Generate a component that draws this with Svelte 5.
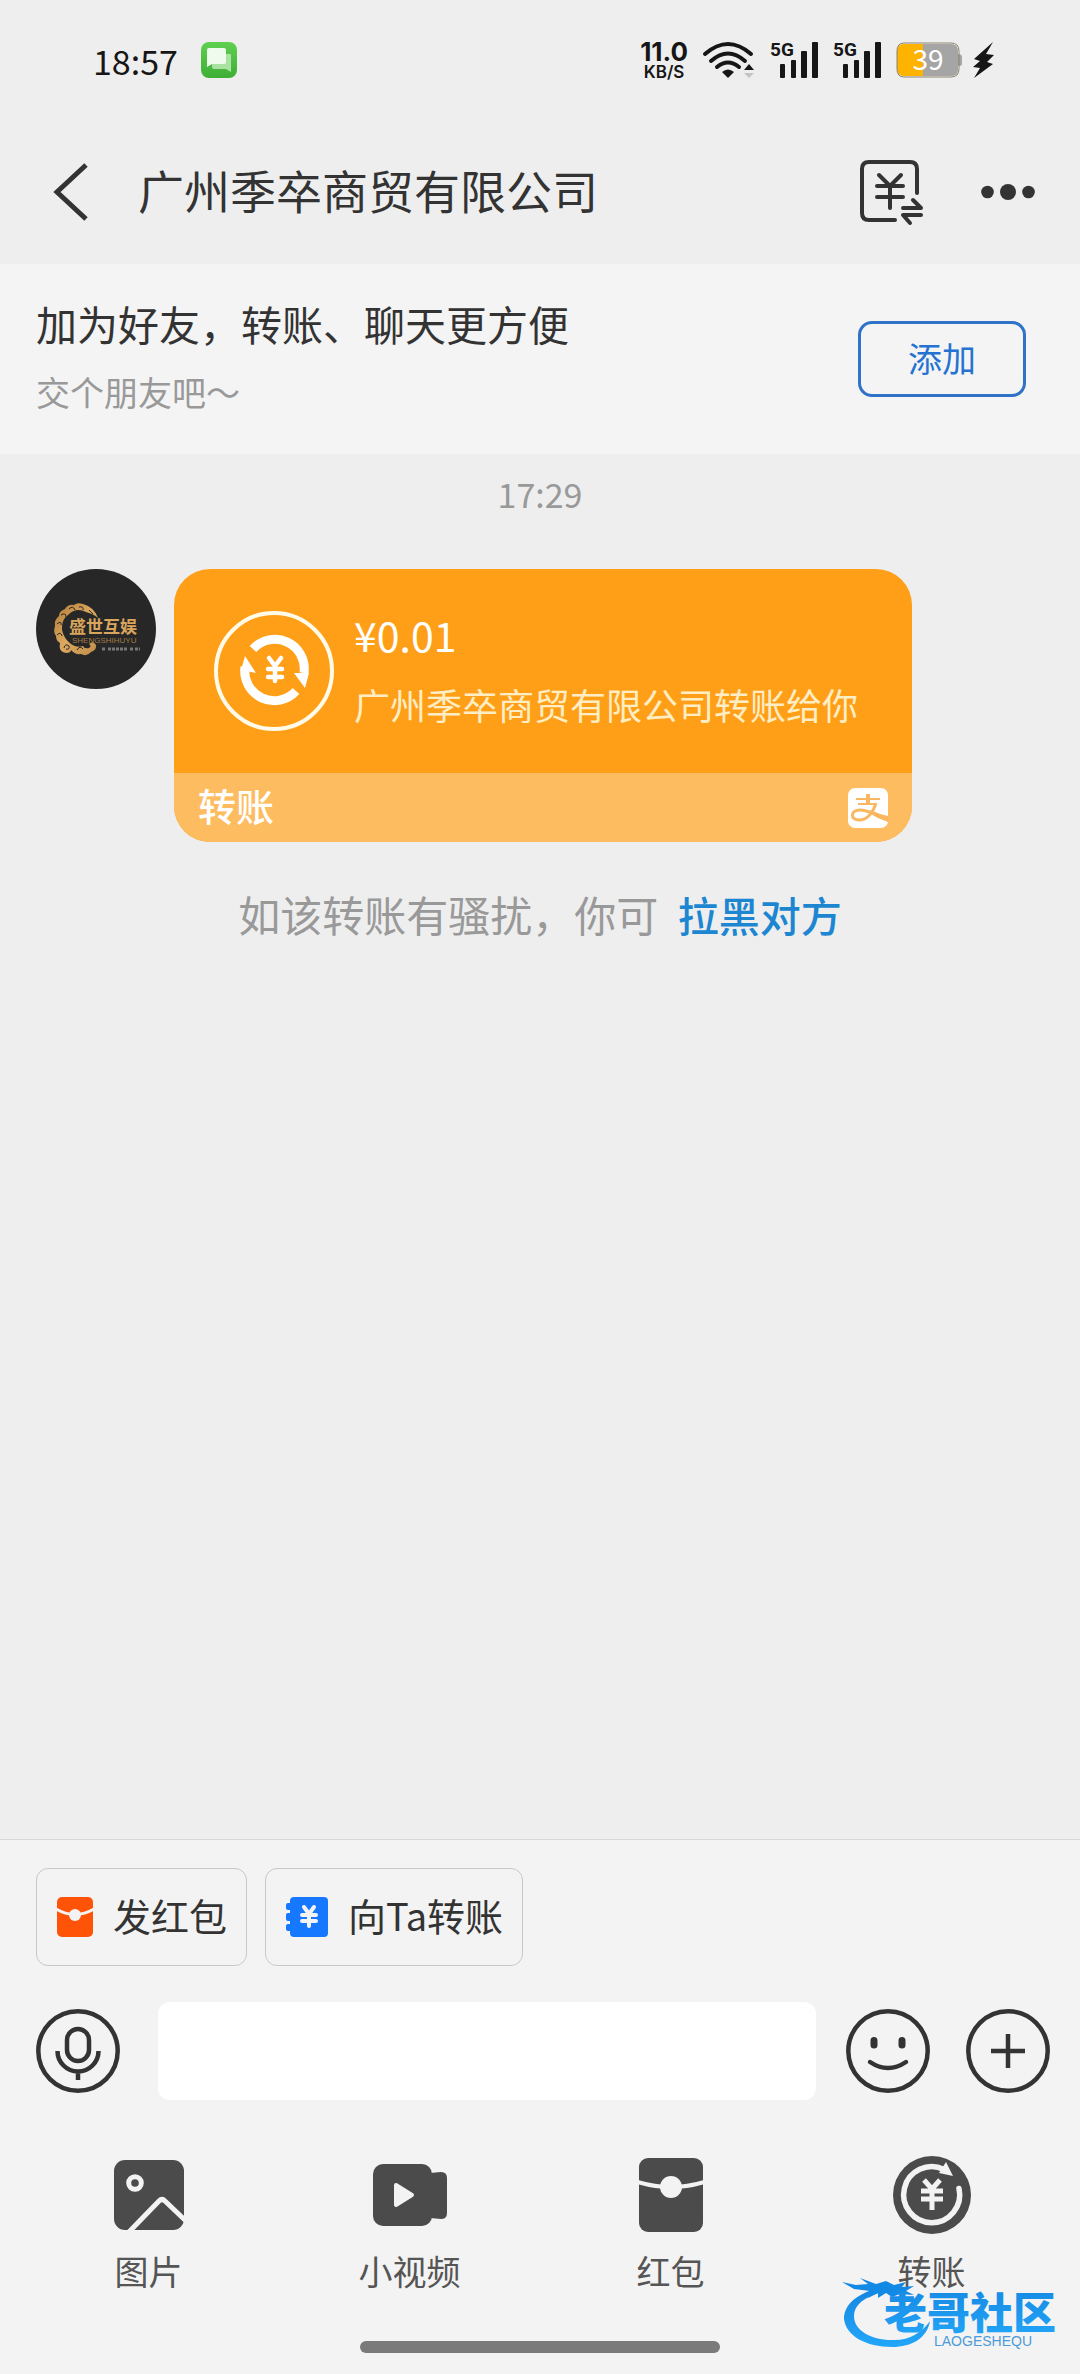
<script lang="ts">
const peer = '广州季卒商贸有限公司';
let draft = $state('');

type Tool = { id: string; label: string };
const tools: Tool[] = [
	{ id: 'picture', label: '图片' },
	{ id: 'video', label: '小视频' },
	{ id: 'packet', label: '红包' },
	{ id: 'transfer', label: '转账' }
];
</script>

{#snippet signal()}
	<svg width="48" height="36" viewBox="0 0 48 36" aria-label="5G signal">
		<text class="net" x="0" y="14">5G</text>
		<g fill="#161616">
			<rect x="10" y="22" width="5" height="14" rx="1" />
			<rect x="21" y="18" width="5" height="18" rx="1" />
			<rect x="31" y="9" width="6" height="27" rx="1" />
			<rect x="42" y="0" width="6" height="36" rx="1" />
		</g>
	</svg>
{/snippet}

<div class="screen">
	<div class="status">
		<span class="clock">18:57</span>
		<svg width="36" height="36" viewBox="0 0 36 36" aria-hidden="true">
			<defs>
				<linearGradient id="msg" x1="0" y1="0" x2="0" y2="1">
					<stop offset="0" stop-color="#5fd050" />
					<stop offset="1" stop-color="#3fae35" />
				</linearGradient>
			</defs>
			<rect width="36" height="36" rx="8" fill="url(#msg)" />
			<path d="M13 12H29Q30 12 30 13V30L25 27H13Q11 27 11 25V14Q11 12 13 12Z" fill="#a9e2a2" />
			<path d="M8 6H23Q25 6 25 8V20Q25 22 23 22H11L6 25V8Q6 6 8 6Z" fill="#effbed" />
		</svg>

		<div class="indicators">
			<div class="speed"><b>11.0</b><span>KB/S</span></div>
			<svg width="52" height="38" viewBox="0 0 52 38" aria-label="Wi-Fi">
				<g fill="none" stroke="#161616" stroke-width="4" stroke-linecap="round">
					<path d="M2 13Q25 -7 48 13" />
					<path d="M8 20Q25 5 42 20" />
					<path d="M14 26Q25 17 36 26" />
				</g>
				<path d="M19 31Q25 26 31 31L25 37Z" fill="#161616" />
				<path d="M41 29L46 23L51 29Z" fill="#161616" />
				<path d="M41 32L46 37L51 32Z" fill="#c4c4c4" />
			</svg>
			{@render signal()}
			{@render signal()}
			<div class="power">
				<svg width="66" height="36" viewBox="0 0 66 36" aria-label="battery 39%">
					<path d="M27 2H55Q62 2 62 9V12Q66 12 66 15V22Q66 24 62 24V28Q62 34 55 34H27Z" fill="#a5a5a5" />
					<path d="M27 2H8Q1 2 1 9V27Q1 34 8 34H27Z" fill="#fdb300" />
					<path d="M8 1H55Q63 1 63 9V27Q63 35 55 35H8Q1 35 1 27V9Q1 1 8 1Z" fill="none" stroke="#8c8370" />
					<text class="charge" x="32" y="28" text-anchor="middle">39</text>
				</svg>
				<svg width="22" height="37" viewBox="0 0 22 37" aria-hidden="true">
					<path d="M20 0L1 17L7 19L0 25L7 26L1 36L20 22L14 20L21 13L13 12Z" fill="#161616" />
				</svg>
			</div>
		</div>
	</div>

	<header>
		<button class="icon" type="button" aria-label="返回">
			<svg width="34" height="56" viewBox="0 0 34 56">
				<path d="M32 1L3 28L32 55" fill="none" stroke="#333" stroke-width="5" />
			</svg>
		</button>
		<h1>{peer}</h1>
		<button class="icon" type="button" aria-label="转账记录">
			<svg width="64" height="66" viewBox="0 0 64 66">
				<g fill="none" stroke="#333" stroke-width="4" stroke-linecap="round" stroke-linejoin="round">
					<path d="M57 34V10Q57 3 50 3H9Q2 3 2 10V54Q2 61 9 61H35" />
					<path d="M19 16L30 27L41 16M17 27H43M17 38H43M30 27V49" />
					<path d="M43 49H61L53 41M61 56H43L50 64" />
				</g>
			</svg>
		</button>
		<button class="icon" type="button" aria-label="更多">
			<svg width="54" height="16" viewBox="0 0 54 16" fill="#333">
				<circle cx="6.5" cy="8" r="6.3" />
				<circle cx="27" cy="8" r="8" />
				<circle cx="47.5" cy="8" r="6.3" />
			</svg>
		</button>
	</header>

	<section class="friend">
		<div>
			<p class="lead">加为好友，转账、聊天更方便</p>
			<p class="hint">交个朋友吧～</p>
		</div>
		<button class="add" type="button">添加</button>
	</section>

	<main>
		<time>17:29</time>
		<div class="message">
			<svg class="avatar" width="120" height="120" viewBox="0 0 120 120" aria-label="盛世互娱">
				<defs>
					<linearGradient id="gold" x1="0" y1="0" x2="1" y2="1">
						<stop offset="0" stop-color="#b07a38" />
						<stop offset="0.5" stop-color="#dca85e" />
						<stop offset="1" stop-color="#c08d4a" />
					</linearGradient>
				</defs>
				<circle cx="60" cy="60" r="60" fill="#272727" />
				<path
					d="M62 49Q58 38 47 35Q41 33 38 36Q32 35 29 40Q23 42 23 47Q18 51 19 57Q17 63 20 67Q20 72 24 74Q22 83 30 84Q35 84 35 81Q39 86 45 85Q51 88 55 83Q61 81 60 76Q57 71 53 75Q56 77 53 79Q48 80 47 77Q40 79 35 75Q28 70 26 61Q25 51 32 46Q40 38 50 43Q58 45 62 49Z"
					fill="url(#gold)"
				/>
				<path
					d="M21 55q5-4 4 1M25 46q5-3 5 2M33 40q4-4 6 1M43 38q5-1 4 3M21 66q4-4 5 1M28 79q1-5 5-2q1 4-3 3M41 81q3-5 6-1M53 41l4 4"
					fill="none"
					stroke="#272727"
				/>
				<text class="brand" x="33" y="64">盛世互娱</text>
				<text class="brand-latin" x="36" y="74">SHENGSHIHUYU</text>
				<path d="M66 80H70M72 80H92M94 80H97M99 80H104" stroke="#777" stroke-width="3" stroke-dasharray="3 1" />
			</svg>

			<article>
				<div class="body">
					<svg width="120" height="120" viewBox="0 0 120 120" aria-hidden="true">
						<circle cx="60" cy="60" r="58" fill="none" stroke="#fffbe8" stroke-width="4" />
						<g fill="none" stroke="#fff" stroke-width="9">
							<path d="M39 38A29.5 29.5 0 0 1 90 62" />
							<path d="M82 80A29.5 29.5 0 0 1 31 56" />
						</g>
						<path d="M80 62L95 62L91 77ZM42 62L27 59L31 45Z" fill="#fff" />
						<path
							d="M55 47L61 55L67 47M54 58H68M54 66H68M61 55V70"
							fill="none"
							stroke="#fff"
							stroke-width="4.5"
							stroke-linecap="round"
						/>
					</svg>
					<div class="detail">
						<p class="amount">¥0.01</p>
						<p class="summary">{peer}转账给你</p>
					</div>
				</div>
				<div class="foot">
					<span>转账</span>
					<svg width="40" height="40" viewBox="0 0 40 40" aria-label="支付宝">
						<rect width="40" height="40" rx="7" fill="#fff" />
						<g fill="none" stroke="#f9b761">
							<path d="M20 6V15" stroke-width="4" />
							<path d="M8 11H32M10 16H28" stroke-width="2" />
							<path d="M28 15C25 25 19 32 11 32C2 32 2 22 12 22C19 22 26 26 32 28" stroke-width="3" />
						</g>
						<path d="M22 22Q31 26 40 28V34Q30 31 21 25Z" fill="#f9b761" />
					</svg>
				</div>
			</article>
		</div>
		<p class="notice">如该转账有骚扰，你可 <a href="#block">拉黑对方</a></p>
	</main>

	<footer>
		<div class="chips">
			<button type="button">
				<svg width="36" height="40" viewBox="0 0 36 40" aria-hidden="true">
					<rect width="36" height="40" rx="5" fill="#ff5407" />
					<path d="M-1 12Q18 23 37 12" fill="none" stroke="#f3f3f3" stroke-width="3" />
					<circle cx="18" cy="18" r="6" fill="#f3f3f3" />
				</svg>
				<span>发红包</span>
			</button>
			<button type="button">
				<svg width="42" height="40" viewBox="0 0 42 40" aria-hidden="true">
					<path
						d="M8 0H38Q42 0 42 4V36Q42 40 38 40H8Q4 40 4 36V34H2Q0 34 0 32V29Q0 27 2 27H4V24H2Q0 24 0 22V18Q0 16 2 16H4V13H2Q0 13 0 11V8Q0 6 2 6H4V4Q4 0 8 0Z"
						fill="#1677ff"
					/>
					<path
						d="M18 10L23 17L28 10M16 18H30M16 24H30M23 17V29"
						fill="none"
						stroke="#f3f3f3"
						stroke-width="4"
						stroke-linecap="round"
					/>
				</svg>
				<span>向Ta转账</span>
			</button>
		</div>

		<div class="compose">
			<button class="icon" type="button" aria-label="语音">
				<svg width="84" height="84" viewBox="0 0 84 84" fill="none" stroke="#333" stroke-width="4.5">
					<circle cx="42" cy="42" r="39.7" />
					<rect x="31" y="20" width="22" height="32" rx="11" />
					<path d="M21.5 42A20.5 20.5 0 0 0 62.5 42M42 62V71" />
				</svg>
			</button>
			<input type="text" aria-label="输入消息" bind:value={draft} />
			<div class="extras">
				<button class="icon" type="button" aria-label="表情">
					<svg width="84" height="84" viewBox="0 0 84 84" fill="none" stroke="#333" stroke-linecap="round">
						<circle cx="42" cy="42" r="39.7" stroke-width="4.5" />
						<path d="M28 31.5V36M56 31.5V36" stroke-width="7" />
						<path d="M24 53Q42 65 60 53" stroke-width="4.5" />
					</svg>
				</button>
				<button class="icon" type="button" aria-label="更多功能">
					<svg width="84" height="84" viewBox="0 0 84 84" fill="none" stroke="#333" stroke-width="4.5">
						<circle cx="42" cy="42" r="39.7" />
						<path d="M25 42H59M42 25V59" />
					</svg>
				</button>
			</div>
		</div>

		<nav>
			{#each tools as tool (tool.id)}
				<button type="button">
					<span class="glyph">
						{#if tool.id === 'picture'}
							<svg width="70" height="70" viewBox="0 0 70 70">
								<rect width="70" height="70" rx="11" fill="#4b4b4b" />
								<circle cx="21" cy="23" r="6.3" fill="none" stroke="#f3f3f3" stroke-width="5" />
								<path d="M13 74L45 41Q48 38 51 41L73 62" fill="none" stroke="#f3f3f3" stroke-width="5" />
							</svg>
						{:else if tool.id === 'video'}
							<svg width="74" height="62" viewBox="0 0 74 62">
								<rect width="59" height="62" rx="10" fill="#4b4b4b" />
								<path d="M57 9L68 8Q74 8 74 14V49Q74 55 68 55L57 54Z" fill="#4b4b4b" />
								<path d="M23 21L39 31L23 41Z" fill="#f3f3f3" stroke="#f3f3f3" stroke-width="4" stroke-linejoin="round" />
							</svg>
						{:else if tool.id === 'packet'}
							<svg width="64" height="74" viewBox="0 0 64 74">
								<rect width="64" height="74" rx="9" fill="#4b4b4b" />
								<path d="M-1 24Q32 34 65 24" fill="none" stroke="#f3f3f3" stroke-width="4" />
								<circle cx="32" cy="29" r="11" fill="#f3f3f3" />
							</svg>
						{:else}
							<svg width="78" height="78" viewBox="0 0 78 78">
								<circle cx="39" cy="39" r="39" fill="#4b4b4b" />
								<path
									d="M66 32.5A28 28 0 1 1 51 13.5"
									fill="none"
									stroke="#f3f3f3"
									stroke-width="5.5"
									stroke-linecap="round"
								/>
								<path d="M53 6L60 20L46 17Z" fill="#f3f3f3" />
								<path d="M31 24L39 33L47 24M28 35H50M28 43H50M39 33V54" fill="none" stroke="#f3f3f3" stroke-width="5" />
							</svg>
						{/if}
					</span>
					{tool.label}
				</button>
			{/each}
		</nav>
		<div class="home"></div>

		<!-- community stamp laid over the corner of the toolbar -->
		<svg class="stamp" width="222" height="72" viewBox="0 0 222 72" aria-hidden="true">
			<defs>
				<linearGradient id="wave" x1="0" y1="0" x2="0" y2="1">
					<stop offset="0" stop-color="#1585e0" />
					<stop offset="1" stop-color="#22a7fa" />
				</linearGradient>
			</defs>
			<path
				d="M36 10C12 17 2 28 2 41C4 58 24 69 50 69C70 69 85 60 88 43C80 55 66 63 50 62C28 62 12 52 12 38C12 27 22 19 40 14Z"
				fill="url(#wave)"
			/>
			<path
				d="M0 4L14 7L26 6L18 0L34 6L44 3L52 7L64 4L60 9L72 8L64 13L72 17L58 16L50 19L44 15L36 20L36 15L26 20L28 13L12 11Z"
				fill="#1389e6"
			/>
			<text class="stamp-name" x="42" y="51" fill="url(#wave)">老哥社区</text>
			<text class="stamp-latin" x="92" y="68">LAOGESHEQU</text>
		</svg>
	</footer>
</div>

<style>
	:global(body) {
		margin: 0;
		background: #eee;
	}
	.screen {
		display: flex;
		flex-direction: column;
		min-height: 100vh;
		background: #eee;
		color: #333;
		font-family: 'Noto Sans CJK SC', sans-serif;
		font-size: 34px;
	}
	h1,
	p {
		margin: 0;
		font-weight: 400;
	}
	svg {
		display: block;
		flex-shrink: 0;
		overflow: visible;
	}
	.glyph svg {
		overflow: hidden;
	}
	button {
		padding: 0;
		border: 0;
		background: none;
		color: inherit;
		font: inherit;
		cursor: pointer;
	}

	.status {
		display: flex;
		align-items: center;
		height: 120px;
		padding: 0 85px 0 93px;
		color: #161616;
	}
	.clock {
		width: 108px;
	}
	.indicators {
		display: flex;
		align-items: center;
		gap: 15px;
		margin-left: auto;
	}
	.speed {
		display: flex;
		flex-direction: column;
		align-items: center;
		font-family: Inter, sans-serif;
		font-size: 17px;
		font-weight: 600;
		line-height: 17px;
	}
	.speed b {
		font-size: 26px;
		font-weight: 700;
		line-height: 24px;
	}
	.net {
		fill: #161616;
		font: 700 19px Roboto, sans-serif;
	}
	.charge {
		fill: #fff;
		font-size: 28px;
	}
	.power {
		display: flex;
		align-items: center;
		gap: 11px;
	}

	header {
		display: flex;
		align-items: center;
		height: 144px;
		padding: 0 45px 0 54px;
	}
	h1 {
		flex: 1;
		margin-left: 50px;
		padding-bottom: 6px;
		font-size: 46px;
		line-height: 64px;
	}
	header .icon:last-child {
		margin-left: 57px;
	}

	.friend {
		display: flex;
		align-items: center;
		justify-content: space-between;
		box-sizing: border-box;
		min-height: 190px;
		padding: 0 54px 0 36px;
		background: #f4f4f4;
	}
	.lead {
		margin-bottom: 6px;
		font-size: 41px;
		line-height: 60px;
	}
	.hint {
		color: #999;
		line-height: 66px;
	}
	.add {
		box-sizing: border-box;
		width: 168px;
		height: 76px;
		padding-bottom: 4px;
		border: 3px solid #2f72c8;
		border-radius: 14px;
		color: #2472d2;
	}

	main {
		flex: 1;
		display: flex;
		flex-direction: column;
		padding: 15px 36px 0;
	}
	time {
		align-self: center;
		color: #999;
		line-height: 50px;
	}
	.message {
		display: flex;
		align-items: flex-start;
		gap: 18px;
		margin-top: 50px;
		padding-right: 132px;
	}
	article {
		flex: 1;
		overflow: hidden;
		border-radius: 36px;
		background: #ff9f18;
		color: #fff;
	}
	.body {
		display: flex;
		align-items: center;
		gap: 20px;
		height: 204px;
		padding-left: 40px;
		line-height: 70px;
	}
	.detail {
		padding-bottom: 4px;
	}
	.amount {
		font-size: 41px;
	}
	.summary {
		color: #ffedc4;
		font-size: 36px;
		white-space: nowrap;
	}
	.foot {
		display: flex;
		align-items: center;
		justify-content: space-between;
		height: 69px;
		padding: 0 24px;
		background: #febc60;
		font-size: 38px;
		font-weight: 500;
		line-height: 60px;
	}
	.foot span {
		padding-bottom: 6px;
	}
	.brand {
		fill: #d9a45c;
		font-size: 17px;
		font-weight: 700;
	}
	.brand-latin {
		fill: #a27a44;
		font: 8px 'Liberation Sans', sans-serif;
	}
	.notice {
		margin-top: 42px;
		color: #999;
		font-size: 42px;
		line-height: 60px;
		text-align: center;
	}
	.notice a {
		margin-left: 10px;
		color: #1c86d1;
		font-size: 41px;
		font-weight: 500;
		text-decoration: none;
	}

	footer {
		position: relative;
		padding-bottom: 21px;
		border-top: 1px solid #d9d9d9;
		background: #f3f3f3;
	}
	.chips {
		display: flex;
		gap: 18px;
		padding: 28px 36px 36px;
	}
	.chips button {
		display: flex;
		align-items: center;
		gap: 20px;
		box-sizing: border-box;
		height: 98px;
		padding: 0 19px 0 20px;
		border: 1px solid #c8c8c8;
		border-radius: 12px;
		font-size: 38px;
	}
	.chips span {
		padding-bottom: 6px;
	}
	.compose {
		display: flex;
		align-items: center;
		padding: 0 30px 0 36px;
	}
	input {
		flex: 1;
		box-sizing: border-box;
		min-width: 0;
		height: 98px;
		margin: 0 30px 0 38px;
		padding: 0 24px;
		border: 0;
		border-radius: 12px;
		outline: none;
		background: #fff;
		color: inherit;
		font: inherit;
	}
	.extras {
		display: flex;
		gap: 36px;
	}
	nav {
		display: flex;
		padding: 55px 18px 0;
	}
	nav button {
		flex: 1;
		color: #555;
		line-height: 48px;
	}
	.glyph {
		display: flex;
		align-items: center;
		justify-content: center;
		height: 80px;
		margin-bottom: 12px;
	}
	.home {
		width: 33.3333%;
		height: 12px;
		margin: 46px auto 0;
		border-radius: 6px;
		background: #7a7a7a;
	}
	.stamp {
		position: absolute;
		right: 16px;
		bottom: 24px;
		pointer-events: none;
	}
	.stamp-name {
		font-size: 43px;
		font-weight: 900;
	}
	.stamp-latin {
		fill: #4a9bdc;
		font: 14px 'Liberation Sans', sans-serif;
	}
</style>
